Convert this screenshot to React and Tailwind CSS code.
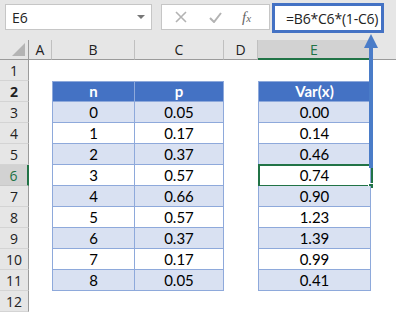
import React from 'react';

const rows = [
  { n: 0, p: '0.05', v: '0.00' },
  { n: 1, p: '0.17', v: '0.14' },
  { n: 2, p: '0.37', v: '0.46' },
  { n: 3, p: '0.57', v: '0.74' },
  { n: 4, p: '0.66', v: '0.90' },
  { n: 5, p: '0.57', v: '1.23' },
  { n: 6, p: '0.37', v: '1.39' },
  { n: 7, p: '0.17', v: '0.99' },
  { n: 8, p: '0.05', v: '0.41' },
];

const uiFont = { fontFamily: '"Open Sans", "Noto Sans", sans-serif' };
const cellFont = { fontFamily: 'Lato, "Liberation Sans", sans-serif' };

function RowHead({ num, active }) {
  return (
    <div
      className={
        active
          ? 'w-[29px] shrink-0 h-full flex items-center justify-center border-b border-[#c8c8c8] border-r-2 border-r-[#217346] bg-[#d2d2d2] text-[#217346] text-[14px]'
          : 'w-[29px] shrink-0 h-full flex items-center justify-center border-b border-[#d4d4d4] border-r border-r-[#9b9b9b] bg-[#e6e6e6] text-[#222] text-[14px]'
      }
      style={uiFont}
    >
      {num}
    </div>
  );
}

export default function App() {
  return (
    <div className="relative w-[396px] h-[312px] overflow-hidden bg-white">
      {/* formula bar */}
      <div className="h-[40px] bg-[#e6e6e6] flex items-start">
        <div className="ml-[5px] mt-[4px] w-[147px] h-[26px] bg-white border border-[#c6c6c6] flex items-center justify-between pl-[6px] pr-[6px]">
          <span className="text-[14px] text-[#222]" style={uiFont}>E6</span>
          <span className="w-0 h-0 border-l-[4px] border-r-[4px] border-t-[4px] border-l-transparent border-r-transparent border-t-[#777]" />
        </div>
        <div className="ml-[9px] mt-[4px] w-[109px] h-[26px] bg-white border border-[#c6c6c6] flex items-center">
          <svg className="ml-[13px]" width="12" height="12" viewBox="0 0 12 12">
            <path d="M1 1 L11 11 M11 1 L1 11" stroke="#b3b3b3" strokeWidth="1.6" fill="none" />
          </svg>
          <svg className="ml-[22px]" width="13" height="11" viewBox="0 0 13 11">
            <path d="M1 6 L5 10 L12 1" stroke="#b3b3b3" strokeWidth="2" fill="none" />
          </svg>
          <span className="ml-[20px] text-[15px] italic text-[#666]" style={{ fontFamily: '"Liberation Serif", serif' }}>
            f<span className="text-[11px]">x</span>
          </span>
        </div>
        <div className="ml-[2px] mt-[3px] w-[112px] h-[30px] bg-white border-[3px] border-[#4472c4] flex items-center pl-[11px]">
          <span className="text-[14px] text-[#222] tracking-[-0.2px]" style={uiFont}>=B6*C6*(1-C6)</span>
        </div>
      </div>

      {/* column headers */}
      <div className="h-[20px] flex bg-[#e6e6e6] text-[14px] text-[#222]" style={uiFont}>
        <div className="relative w-[29px] shrink-0 border-r border-b border-[#9b9b9b]">
          <svg className="absolute right-[3px] bottom-[3px]" width="13" height="13" viewBox="0 0 13 13">
            <path d="M13 0 L13 13 L0 13 Z" fill="#b4b4b4" />
          </svg>
        </div>
        <div className="w-[23px] shrink-0 flex items-center justify-center border-r border-r-[#c0c0c0] border-b border-b-[#9b9b9b]">A</div>
        <div className="w-[83px] shrink-0 flex items-center justify-center border-r border-r-[#c0c0c0] border-b border-b-[#9b9b9b]">B</div>
        <div className="w-[89px] shrink-0 flex items-center justify-center border-r border-r-[#c0c0c0] border-b border-b-[#9b9b9b]">C</div>
        <div className="w-[34px] shrink-0 flex items-center justify-center border-r border-r-[#c0c0c0] border-b border-b-[#9b9b9b]">D</div>
        <div className="w-[113px] shrink-0 flex items-center justify-center bg-[#d2d2d2] text-[#217346] border-r border-r-[#c0c0c0] border-b-2 border-b-[#217346]">E</div>
        <div className="flex-1 border-b border-b-[#9b9b9b]" />
      </div>

      {/* row 1 */}
      <div className="h-[21px] flex">
        <RowHead num={1} />
      </div>

      {/* row 2: table headers */}
      <div className="h-[21px] flex text-[15px] font-bold text-white" style={cellFont}>
        <RowHead num={2} />
        <div className="w-[23px] shrink-0" />
        <div className="w-[83px] shrink-0 flex items-center justify-center bg-[#4472c4] border border-[#8ea9db]">n</div>
        <div className="w-[89px] shrink-0 flex items-center justify-center bg-[#4472c4] border-y border-r border-[#8ea9db]">p</div>
        <div className="w-[34px] shrink-0" />
        <div className="w-[113px] shrink-0 flex items-center justify-center bg-[#4472c4] border border-[#8ea9db]">Var(x)</div>
      </div>

      {rows.map((r, i) => {
        const bg = i % 2 === 0 ? 'bg-[#d9e1f2]' : 'bg-white';
        const active = i === 3;
        return (
          <div key={r.n} className="h-[21px] flex text-[15px] text-black" style={cellFont}>
            <RowHead num={i + 3} active={active} />
            <div className="w-[23px] shrink-0" />
            <div className={`w-[83px] shrink-0 flex items-center justify-center border-x border-b border-[#8ea9db] ${bg}`}>{r.n}</div>
            <div className={`w-[89px] shrink-0 flex items-center justify-center border-r border-b border-[#8ea9db] ${bg}`}>{r.p}</div>
            <div className="w-[34px] shrink-0" />
            <div className={`relative w-[113px] shrink-0 flex items-center justify-center border-x border-b border-[#8ea9db] ${bg}`}>
              {active && (
                <>
                  <span className="absolute -left-[1px] -top-[1px] w-[115px] h-[23px] border-2 border-[#217346]" />
                  <span className="absolute -right-[4px] -bottom-[4px] w-[6px] h-[6px] bg-[#217346] border border-white" />
                </>
              )}
              <span className="relative">{r.v}</span>
            </div>
          </div>
        );
      })}

      {/* row 12 */}
      <div className="h-[21px] flex">
        <RowHead num={12} />
      </div>

      {/* arrow from formula to cell */}
      <svg className="absolute left-[363px] top-[33px]" width="16" height="136" viewBox="0 0 16 136">
        <path d="M8 1 L15 15 L1 15 Z" fill="#4a7cc8" />
        <rect x="6" y="14" width="4" height="121" fill="#4a7cc8" />
      </svg>
    </div>
  );
}
